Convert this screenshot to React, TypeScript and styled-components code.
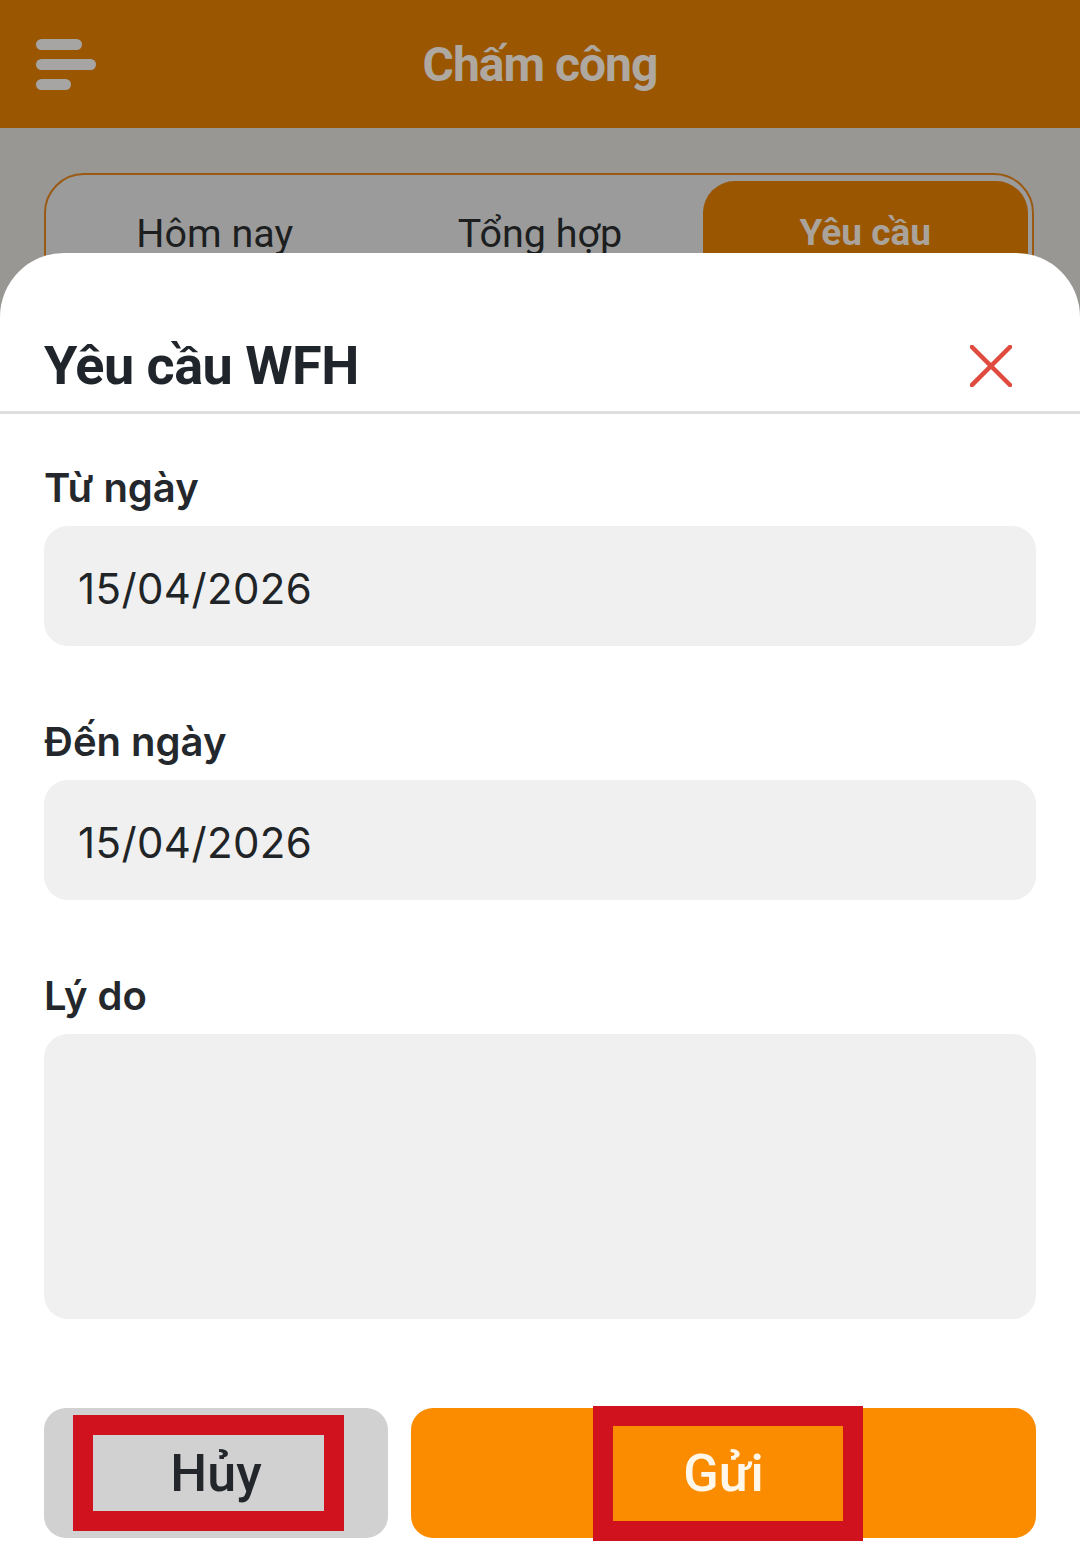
import React from "react";
import styled, { createGlobalStyle } from "styled-components";

const GlobalStyle = createGlobalStyle`
  html, body {
    margin: 0;
    padding: 0;
  }
  body {
    width: 1080px;
    height: 1562px;
    overflow: hidden;
    background: #999794;
    font-family: Roboto, "Noto Sans", sans-serif;
  }
  * {
    box-sizing: border-box;
  }
`;

const Screen = styled.div`
  position: relative;
  width: 1080px;
  height: 1562px;
  overflow: hidden;
  background: #999794;
`;

const TopBar = styled.header`
  height: 128px;
  background: #9a5600;
  display: flex;
  align-items: center;
  padding: 0 36px;
`;

const MenuButton = styled.div`
  width: 60px;
  display: flex;
  flex-direction: column;
  gap: 9px;
`;

const MenuBar = styled.span<{ $w: number }>`
  display: block;
  width: ${(p) => p.$w}px;
  height: 11px;
  border-radius: 6px;
  background: #a7a5a3;
`;

const TopTitle = styled.h1`
  flex: 1;
  margin: 0;
  text-align: center;
  font-family: Roboto, sans-serif;
  font-weight: 700;
  font-size: 48px;
  letter-spacing: -1px;
  color: #aea8a1;
`;

const Spacer = styled.div`
  width: 60px;
`;

const TabArea = styled.div`
  padding: 45px 46px 0 44px;
`;

const TabBar = styled.nav`
  height: 124px;
  border: 2px solid #9a5a14;
  border-radius: 40px;
  background: #9b9b9b;
  padding: 6px 4px 0 6px;
  display: grid;
  grid-template-columns: 1fr 1fr 1fr;
`;

const Tab = styled.div<{ $active?: boolean }>`
  display: flex;
  align-items: flex-start;
  justify-content: center;
  padding-top: ${(p) => (p.$active ? 30 : 29)}px;
  border-radius: 32px 32px 0 0;
  background: ${(p) => (p.$active ? "#9a5600" : "transparent")};
  color: ${(p) => (p.$active ? "#aaa39b" : "#1c1e20")};
  font-family: Roboto, sans-serif;
  font-weight: ${(p) => (p.$active ? 700 : 400)};
  font-size: ${(p) => (p.$active ? 37 : 39.5)}px;
`;

const Sheet = styled.section`
  position: absolute;
  top: 253px;
  left: 0;
  right: 0;
  bottom: 0;
  background: #ffffff;
  border-radius: 64px 64px 0 0;
  display: flex;
  flex-direction: column;
`;

const SheetHeader = styled.div`
  height: 161px;
  display: flex;
  align-items: flex-end;
  justify-content: space-between;
  padding: 0 68px 9px 44px;
  border-bottom: 3px solid #dedede;
`;

const SheetTitle = styled.h2`
  margin: 0;
  font-family: Roboto, sans-serif;
  font-weight: 700;
  font-size: 54px;
  line-height: 72px;
  letter-spacing: -0.5px;
  color: #1f252b;
`;

const CloseButton = styled.button`
  border: none;
  background: none;
  padding: 0;
  margin-bottom: 15px;
  width: 42px;
  height: 42px;
  display: flex;
  align-items: center;
  justify-content: center;
`;

const Form = styled.div`
  padding: 48px 44px 0 44px;
  display: flex;
  flex-direction: column;
`;

const Field = styled.div`
  display: flex;
  flex-direction: column;
  gap: 12px;
  margin-bottom: 70px;
`;

const Label = styled.label`
  font-family: Inter, "Noto Sans", sans-serif;
  font-weight: 600;
  font-size: 40px;
  line-height: 52px;
  color: #24282c;
`;

const InputBox = styled.div<{ $tall?: boolean }>`
  height: ${(p) => (p.$tall ? 285 : 120)}px;
  border-radius: 24px;
  background: #f0f0f0;
  display: flex;
  align-items: ${(p) => (p.$tall ? "flex-start" : "center")};
  padding: 4px 34px 0 34px;
  font-family: Inter, "Noto Sans", sans-serif;
  font-size: 42px;
  letter-spacing: 0.4px;
  color: #212427;
`;

const Actions = styled.div`
  display: grid;
  grid-template-columns: 344px 1fr;
  gap: 23px;
  padding: 19px 44px 0 44px;
`;

const ActionButton = styled.button<{ $primary?: boolean }>`
  height: 130px;
  border: none;
  border-radius: 22px;
  background: ${(p) => (p.$primary ? "#fb8c00" : "#d1d1d1")};
  color: ${(p) => (p.$primary ? "#fff8ea" : "#23272b")};
  font-family: Roboto, sans-serif;
  font-weight: 500;
  font-size: 52px;
  display: flex;
  align-items: center;
  justify-content: center;
  padding: 0;
`;

// red annotation frame drawn over each button in the screenshot
const Highlight = styled.span<{ $w: number; $h: number; $dx: number }>`
  width: ${(p) => p.$w}px;
  height: ${(p) => p.$h}px;
  border: 20px solid #d0121f;
  display: flex;
  align-items: center;
  justify-content: center;
  transform: translateX(${(p) => p.$dx}px);
`;

const ButtonText = styled.span<{ $dx: number }>`
  transform: translateX(${(p) => p.$dx}px);
`;

export default function App() {
  return (
    <Screen>
      <GlobalStyle />
      <TopBar>
        <MenuButton>
          <MenuBar $w={46} />
          <MenuBar $w={60} />
          <MenuBar $w={35} />
        </MenuButton>
        <TopTitle>Chấm công</TopTitle>
        <Spacer />
      </TopBar>
      <TabArea>
        <TabBar>
          <Tab>Hôm nay</Tab>
          <Tab>Tổng hợp</Tab>
          <Tab $active>Yêu cầu</Tab>
        </TabBar>
      </TabArea>

      <Sheet>
        <SheetHeader>
          <SheetTitle>Yêu cầu WFH</SheetTitle>
          <CloseButton aria-label="Đóng">
            <svg width="42" height="42" viewBox="0 0 42 42">
              <path
                d="M2 2 L40 40 M40 2 L2 40"
                stroke="#e04b3f"
                strokeWidth="4.5"
                strokeLinecap="square"
              />
            </svg>
          </CloseButton>
        </SheetHeader>

        <Form>
          <Field>
            <Label>Từ ngày</Label>
            <InputBox>15/04/2026</InputBox>
          </Field>
          <Field>
            <Label>Đến ngày</Label>
            <InputBox>15/04/2026</InputBox>
          </Field>
          <Field>
            <Label>Lý do</Label>
            <InputBox $tall />
          </Field>
        </Form>

        <Actions>
          <ActionButton>
            <Highlight $w={271} $h={116} $dx={-8}>
              <ButtonText $dx={8}>Hủy</ButtonText>
            </Highlight>
          </ActionButton>
          <ActionButton $primary>
            <Highlight $w={270} $h={135} $dx={4}>
              <ButtonText $dx={-4}>Gửi</ButtonText>
            </Highlight>
          </ActionButton>
        </Actions>
      </Sheet>
    </Screen>
  );
}
